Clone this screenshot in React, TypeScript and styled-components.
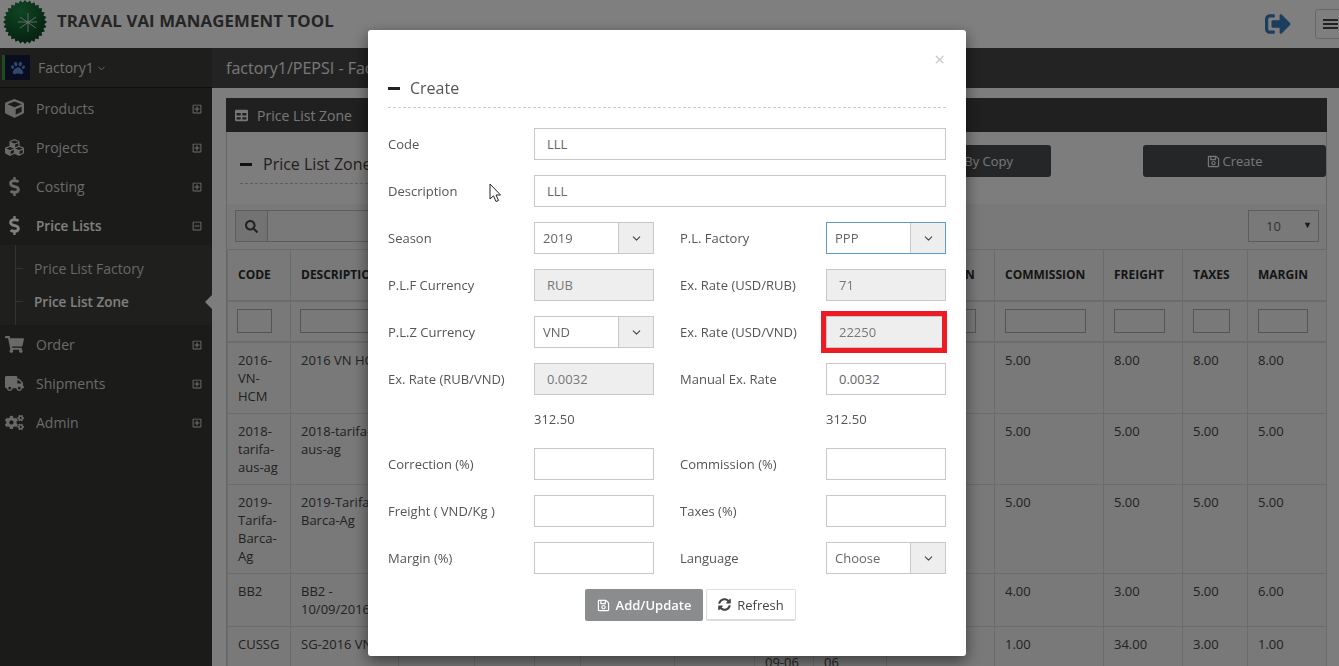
import {ReactNode} from 'react';
import {
  FaCogs,
  FaCube,
  FaCubes,
  FaDollarSign,
  FaPaw,
  FaRegMinusSquare,
  FaRegPlusSquare,
  FaRegSave,
  FaSearch,
  FaShoppingCart,
  FaSignOutAlt,
  FaSyncAlt,
  FaTable,
  FaTruck,
} from 'react-icons/fa';
import {LuChevronDown} from 'react-icons/lu';
import styled, {createGlobalStyle} from 'styled-components';

const GlobalStyle = createGlobalStyle`
  html, body {
    margin: 0;
    height: 100%;
    overflow: hidden;
    background: #fff;
    font-family: 'Open Sans', 'Liberation Sans', sans-serif;
    font-size: 13px;
    color: #333;
  }
  * {
    box-sizing: border-box;
  }
`;

const Page = styled.div`
  height: 100vh;
  display: flex;
  flex-direction: column;
  overflow: hidden;
`;

const Header = styled.header`
  height: 48px;
  flex: none;
  display: flex;
  align-items: center;
  padding-left: 3px;
  background: #fff;
`;

const LogoMark = styled.svg`
  flex: none;
  margin-bottom: 5px;
`;

const Brand = styled.div`
  flex: 1;
  margin-left: 10px;
  padding-bottom: 7px;
  font-size: 16.8px;
  font-weight: 700;
  color: #4a4a4a;
  letter-spacing: 0.1px;
`;

const LogoutIcon = styled(FaSignOutAlt)`
  width: 26px;
  height: 26px;
  margin-right: 24px;
  color: #3a7ab8;
`;

const MenuToggle = styled.div`
  width: 40px;
  height: 30px;
  flex: none;
  margin-right: -16px;
  padding: 9px 0 0 7px;
  border: 1px solid #ccc;
  border-radius: 3px;
`;

const MenuBar = styled.div`
  width: 15px;
  height: 2px;
  margin-bottom: 2px;
  background: #444;
`;

const Body = styled.div`
  flex: 1;
  display: flex;
  min-height: 0;
`;

const Sidebar = styled.aside`
  width: 212px;
  flex: none;
  background: #363634;
`;

const FactoryRow = styled.div`
  height: 40px;
  display: flex;
  align-items: center;
  padding-left: 2px;
  border-bottom: 1px solid #1c1c1c;
  background: #3c3c3a;
  color: #ddd;
  font-size: 14px;
`;

const FactoryBadge = styled.div`
  width: 28px;
  height: 25px;
  display: flex;
  align-items: center;
  justify-content: center;
  margin-right: 8px;
  border-left: 3px solid #3a9a3a;
  background: #151840;
  color: #5d92dd;
  font-size: 14px;
`;

const FactoryChevron = styled(LuChevronDown)`
  margin: 1px 0 0 2px;
  font-size: 11px;
`;

const NavItem = styled.div<{$active?: boolean}>`
  height: 39px;
  display: flex;
  align-items: center;
  padding: 0 10px 0 0;
  color: ${p => (p.$active ? '#fff' : '#d4d4d4')};
  font-size: ${p => (p.$active ? '13.5px' : '14px')};
  font-weight: ${p => (p.$active ? 600 : 400)};
`;

const NavIcon = styled.span`
  width: 36px;
  flex: none;
  display: flex;
  justify-content: center;
  padding-right: 7px;
  font-size: 19px;
`;

const NavLabel = styled.span`
  flex: 1;
`;

const NavToggle = styled.span`
  display: flex;
  font-size: 10px;
  color: #ddd;
`;

const NavList = styled.nav`
  padding-top: 1px;
`;

const SubMenu = styled.div`
  height: 80px;
  padding: 7px 0 0 34px;
  background: #3f3f3d;
  position: relative;
`;

const SubLine = styled.div`
  position: absolute;
  left: 15px;
  top: 0;
  bottom: 0;
  width: 1px;
  background: #666;
`;

const SubItem = styled.div<{$active?: boolean}>`
  height: 33px;
  display: flex;
  align-items: center;
  position: relative;
  color: ${p => (p.$active ? '#fff' : '#ccc')};
  font-size: ${p => (p.$active ? '13.5px' : '14px')};
  font-weight: ${p => (p.$active ? 600 : 400)};

  &::before {
    content: '';
    position: absolute;
    left: -19px;
    top: 16px;
    width: 8px;
    height: 1px;
    background: #666;
  }
`;

const ActiveArrow = styled.div`
  position: absolute;
  right: 0;
  top: 50px;
  border: 7px solid transparent;
  border-right-color: #fafafa;
  border-left-width: 0;
`;

const Main = styled.main`
  flex: 1;
  min-width: 0;
  background: #fafafa;
`;

const Breadcrumb = styled.div`
  height: 40px;
  display: flex;
  align-items: center;
  padding-left: 14px;
  background: #464646;
  color: #f0f0f0;
  font-size: 16px;
`;

const Panel = styled.section`
  width: 1101px;
  margin: 10px 0 0 14px;
  border-right: 1px solid #ccc;
  border-left: 1px solid #ccc;
`;

const PanelHeading = styled.div`
  height: 34px;
  display: flex;
  align-items: center;
  gap: 9px;
  margin: 0 -1px;
  padding-left: 9px;
  background: #404040;
  color: #eee;
  font-size: 14px;
`;

const HeadingIcon = styled(FaTable)`
  font-size: 13px;
`;

const TitleRow = styled.div`
  height: 72px;
  display: flex;
  align-items: flex-start;
  padding: 13px 0 0;
`;

const TitleBlock = styled.div`
  width: 627px;
  height: 39px;
  margin-left: 13px;
  display: flex;
  align-items: center;
  gap: 11px;
  border-bottom: 1px dashed #bbb;
  font-size: 16px;
  color: #4a3a3a;
`;

const Dash = styled.span`
  width: 12px;
  height: 3px;
  flex: none;
  background: #222;
`;

const DarkButton = styled.div<{$width: number; $gap?: number}>`
  width: ${p => p.$width}px;
  height: 32px;
  flex: none;
  display: flex;
  align-items: center;
  justify-content: center;
  gap: 3px;
  margin-left: ${p => p.$gap ?? 0}px;
  border-radius: 3px;
  background: #4b4c4f;
  color: #eee;
  font-size: 13px;
`;

const Toolbar = styled.div`
  height: 45px;
  display: flex;
  align-items: flex-start;
  padding: 6px 7px 0 8px;
  background: #f2f2f2;
`;

const SearchAddon = styled.div`
  width: 33px;
  height: 32px;
  display: flex;
  align-items: center;
  justify-content: center;
  background: #e6e6e6;
  border: 1px solid #bbb;
  color: #444;
  font-size: 13px;
`;

const SearchField = styled.div`
  width: 500px;
  height: 32px;
  margin-right: auto;
  border: 1px solid #bbb;
  border-left: 0;
`;

const PageSize = styled.div`
  width: 71px;
  height: 32px;
  display: flex;
  align-items: center;
  justify-content: space-between;
  padding: 0 6px 0 17px;
  border: 1px solid #bbb;
  color: #666;
`;

const Caret = styled.span`
  margin-bottom: 4px;
  font-size: 9px;
  color: #333;
`;

const Table = styled.table`
  width: 1099px;
  table-layout: fixed;
  border-collapse: collapse;
  background: #f2f2f2;
`;

const HeadCell = styled.th`
  height: 51px;
  padding: 0 0 0 10px;
  border: 1px solid #d8d8d8;
  border-bottom-width: 2px;
  text-align: left;
  font-size: 12px;
  font-weight: 700;
  white-space: nowrap;
  overflow: hidden;
  color: #2b2b2b;
`;

const FilterCell = styled.td<{$inset: number}>`
  height: 41px;
  padding: 0 0 0 ${p => p.$inset}px;
  border: 1px solid #d8d8d8;
  border-bottom-width: 2px;
`;

const FilterBox = styled.div<{$width: number}>`
  width: ${p => p.$width}px;
  height: 24px;
  border: 1px solid #aaa;
`;

const Cell = styled.td<{$tight?: boolean}>`
  padding: 8px ${p => (p.$tight ? 4 : 10)}px 8px 10px;
  border: 1px solid #d8d8d8;
  vertical-align: top;
  line-height: 18px;
  font-size: 13px;
  color: #444;
`;

const Backdrop = styled.div`
  position: fixed;
  inset: 0;
  background: rgba(0, 0, 0, 0.5);
`;

const Modal = styled.div`
  position: fixed;
  left: 368px;
  top: 30px;
  width: 598px;
  height: 626px;
  padding: 0 20px;
  border-radius: 3px;
  background: #fff;
  box-shadow: 0 5px 15px rgba(0, 0, 0, 0.5);
`;

const CloseMark = styled.div`
  position: absolute;
  right: 21px;
  top: 18px;
  font-size: 19px;
  line-height: 22px;
  color: #c8c8c8;
`;

const ModalTitle = styled.div`
  height: 78px;
  padding-bottom: 8px;
  display: flex;
  align-items: flex-end;
  gap: 10px;
  border-bottom: 1px dashed #ccc;
  font-size: 16px;
  color: #555;
`;

const ModalDash = styled(Dash)`
  margin-bottom: 9px;
`;

const Form = styled.div`
  display: flex;
  flex-direction: column;
  gap: 15px;
  padding-top: 20px;
`;

const FormRow = styled.div`
  display: flex;
  gap: 26px;
`;

const Field = styled.div<{$full?: boolean}>`
  width: ${p => (p.$full ? '558px' : '266px')};
  display: flex;
  align-items: center;
`;

const Label = styled.div`
  width: 146px;
  flex: none;
  font-size: 13px;
  color: #555;
`;

const InputBox = styled.div<{$disabled?: boolean}>`
  flex: 1;
  height: 32px;
  display: flex;
  align-items: center;
  padding-left: 12px;
  border: 1px solid #c8c8c8;
  background: ${p => (p.$disabled ? '#eee' : '#fff')};
  font-size: 13px;
  color: ${p => (p.$disabled ? '#777' : '#666')};
  position: relative;
`;

const Highlight = styled.div`
  position: absolute;
  left: -6px;
  top: -6px;
  right: -2px;
  bottom: -6px;
  border: 5px solid #ed1c24;
`;

const SelectBox = styled.div<{$focused?: boolean}>`
  flex: 1;
  height: 32px;
  display: flex;
  align-items: center;
  justify-content: space-between;
  padding-left: 8px;
  border: 1px solid ${p => (p.$focused ? '#5b9bd1' : '#c8c8c8')};
  font-size: 13px;
  color: #666;
`;

const SelectAddon = styled.div`
  width: 35px;
  height: 100%;
  display: flex;
  align-items: center;
  justify-content: center;
  border-left: 1px solid #c8c8c8;
  background: #eee;
  font-size: 13px;
  color: #444;
`;

const ValueRow = styled.div`
  height: 23px;
  display: flex;
  line-height: 18px;
  font-size: 13px;
  color: #555;
`;

const ValueText = styled.div`
  width: 292px;
  flex: none;
  padding-left: 146px;
`;

const Actions = styled.div`
  display: flex;
  gap: 3px;
  padding-left: 197px;
`;

const PrimaryButton = styled.div`
  width: 118px;
  height: 32px;
  display: flex;
  align-items: center;
  justify-content: center;
  gap: 6px;
  border-radius: 2px;
  background: #8b8c8d;
  color: #fff;
  font-size: 13px;
  font-weight: 600;
`;

const RefreshButton = styled.div`
  width: 90px;
  height: 32px;
  display: flex;
  align-items: center;
  justify-content: center;
  gap: 6px;
  border: 1px solid #ddd;
  border-bottom-width: 2px;
  border-radius: 2px;
  background: #fff;
  color: #444;
  font-size: 13px;
`;

const Pointer = styled.svg`
  position: fixed;
  left: 489px;
  top: 183px;
`;

const columns = [63, 108, 76, 60, 46, 94, 80, 59, 73, 108, 109, 79, 65, 79];

const filterWidths = [35, 100, 56, 40, 30, 74, 60, 40, 53, 79, 81, 51, 37, 50];

const headings: Record<number, string> = {
  0: 'CODE',
  1: 'DESCRIPTION',
  9: 'CORRECTION',
  10: 'COMMISSION',
  11: 'FREIGHT',
  12: 'TAXES',
  13: 'MARGIN',
};

type PriceRow = {
  code: string;
  description: string;
  commission: string;
  freight: string;
  taxes: string;
  margin: string;
  from?: string;
  to?: string;
};

const rows: PriceRow[] = [
  {code: '2016-VN-HCM', description: '2016 VN HCM', commission: '5.00', freight: '8.00', taxes: '8.00', margin: '8.00'},
  {code: '2018-tarifa-aus-ag', description: '2018-tarifa-aus-ag', commission: '5.00', freight: '5.00', taxes: '5.00', margin: '5.00'},
  {code: '2019-Tarifa-Barca-Ag', description: '2019-Tarifa-Barca-Ag', commission: '5.00', freight: '5.00', taxes: '5.00', margin: '5.00'},
  {code: 'BB2', description: 'BB2 - 10/09/2016', commission: '4.00', freight: '3.00', taxes: '5.00', margin: '6.00'},
  {code: 'CUSSG', description: 'SG-2016 VN', commission: '1.00', freight: '34.00', taxes: '3.00', margin: '1.00', from: '2016-09-06', to: '2017-09-06'},
];

const navTop: [string, ReactNode][] = [
  ['Products', <FaCube key="cube" />],
  ['Projects', <FaCubes key="cubes" />],
  ['Costing', <FaDollarSign key="costing" />],
];

const navBottom: [string, ReactNode][] = [
  ['Order', <FaShoppingCart key="cart" />],
  ['Shipments', <FaTruck key="truck" />],
  ['Admin', <FaCogs key="cogs" />],
];

const sealPoints = Array.from({length: 56}, (_, i) => {
  const radius = i % 2 === 0 ? 22 : 19.5;
  const angle = (i / 56) * Math.PI * 2;
  return `${22 + radius * Math.cos(angle)},${22 + radius * Math.sin(angle)}`;
}).join(' ');

const Logo = () => (
  <LogoMark width="44" height="44" viewBox="0 0 44 44">
    <defs>
      <radialGradient id="seal" cx="0.4" cy="0.25" r="0.9">
        <stop offset="0" stopColor="#1f8a45" />
        <stop offset="1" stopColor="#06351a" />
      </radialGradient>
    </defs>
    <polygon points={sealPoints} fill="url(#seal)" />
    <g stroke="#e8efe6" strokeWidth="0.8">
      <line x1="25" y1="13" x2="25" y2="32" />
      <line x1="17" y1="17" x2="33" y2="28" />
      <line x1="17" y1="28" x2="33" y2="17" />
      <line x1="15" y1="22" x2="34" y2="22" />
    </g>
  </LogoMark>
);

const FieldSelect = ({value, focused}: {value: string; focused?: boolean}) => (
  <SelectBox $focused={focused}>
    {value}
    <SelectAddon>
      <LuChevronDown />
    </SelectAddon>
  </SelectBox>
);

const NavRow = ({label, icon}: {label: string; icon: ReactNode}) => (
  <NavItem>
    <NavIcon>{icon}</NavIcon>
    <NavLabel>{label}</NavLabel>
    <NavToggle>
      <FaRegPlusSquare />
    </NavToggle>
  </NavItem>
);

export default function App() {
  return (
    <Page>
      <GlobalStyle />
      <Header>
        <Logo />
        <Brand>TRAVAL VAI MANAGEMENT TOOL</Brand>
        <LogoutIcon />
        <MenuToggle>
          <MenuBar />
          <MenuBar />
          <MenuBar />
        </MenuToggle>
      </Header>
      <Body>
        <Sidebar>
          <FactoryRow>
            <FactoryBadge>
              <FaPaw />
            </FactoryBadge>
            Factory1
            <FactoryChevron />
          </FactoryRow>
          <NavList>
            {navTop.map(([label, icon]) => (
              <NavRow key={label} label={label} icon={icon} />
            ))}
            <NavItem $active>
              <NavIcon>
                <FaDollarSign />
              </NavIcon>
              <NavLabel>Price Lists</NavLabel>
              <NavToggle>
                <FaRegMinusSquare />
              </NavToggle>
            </NavItem>
            <SubMenu>
              <SubLine />
              <SubItem>Price List Factory</SubItem>
              <SubItem $active>Price List Zone</SubItem>
              <ActiveArrow />
            </SubMenu>
            {navBottom.map(([label, icon]) => (
              <NavRow key={label} label={label} icon={icon} />
            ))}
          </NavList>
        </Sidebar>
        <Main>
          <Breadcrumb>factory1/PEPSI - Factory</Breadcrumb>
          <Panel>
            <PanelHeading>
              <HeadingIcon />
              Price List Zone
            </PanelHeading>
            <TitleRow>
              <TitleBlock>
                <Dash />
                Price List Zone
              </TitleBlock>
              <DarkButton $width={184}>
                <FaRegSave />
                Create By Copy
              </DarkButton>
              <DarkButton $width={183} $gap={92}>
                <FaRegSave />
                Create
              </DarkButton>
            </TitleRow>
            <Toolbar>
              <SearchAddon>
                <FaSearch />
              </SearchAddon>
              <SearchField />
              <PageSize>
                10
                <Caret>▼</Caret>
              </PageSize>
            </Toolbar>
            <Table>
              <colgroup>
                {columns.map((width, i) => (
                  <col key={i} width={width} />
                ))}
              </colgroup>
              <thead>
                <tr>
                  {columns.map((_, i) => (
                    <HeadCell key={i}>{headings[i]}</HeadCell>
                  ))}
                </tr>
                <tr>
                  {filterWidths.map((width, i) => (
                    <FilterCell key={i} $inset={i < 9 ? 9 : 10}>
                      <FilterBox $width={width} />
                    </FilterCell>
                  ))}
                </tr>
              </thead>
              <tbody>
                {rows.map(row => (
                  <tr key={row.code}>
                    <Cell>{row.code}</Cell>
                    <Cell>{row.description}</Cell>
                    <Cell />
                    <Cell />
                    <Cell />
                    <Cell />
                    <Cell />
                    <Cell>{row.from}</Cell>
                    <Cell $tight>{row.to}</Cell>
                    <Cell />
                    <Cell>{row.commission}</Cell>
                    <Cell>{row.freight}</Cell>
                    <Cell>{row.taxes}</Cell>
                    <Cell>{row.margin}</Cell>
                  </tr>
                ))}
              </tbody>
            </Table>
          </Panel>
        </Main>
      </Body>
      <Backdrop />
      <Modal>
        <CloseMark>×</CloseMark>
        <ModalTitle>
          <ModalDash />
          Create
        </ModalTitle>
        <Form>
          <FormRow>
            <Field $full>
              <Label>Code</Label>
              <InputBox>LLL</InputBox>
            </Field>
          </FormRow>
          <FormRow>
            <Field $full>
              <Label>Description</Label>
              <InputBox>LLL</InputBox>
            </Field>
          </FormRow>
          <FormRow>
            <Field>
              <Label>Season</Label>
              <FieldSelect value="2019" />
            </Field>
            <Field>
              <Label>P.L. Factory</Label>
              <FieldSelect value="PPP" focused />
            </Field>
          </FormRow>
          <FormRow>
            <Field>
              <Label>P.L.F Currency</Label>
              <InputBox $disabled>RUB</InputBox>
            </Field>
            <Field>
              <Label>Ex. Rate (USD/RUB)</Label>
              <InputBox $disabled>71</InputBox>
            </Field>
          </FormRow>
          <FormRow>
            <Field>
              <Label>P.L.Z Currency</Label>
              <FieldSelect value="VND" />
            </Field>
            <Field>
              <Label>Ex. Rate (USD/VND)</Label>
              <InputBox $disabled>
                22250
                <Highlight />
              </InputBox>
            </Field>
          </FormRow>
          <FormRow>
            <Field>
              <Label>Ex. Rate (RUB/VND)</Label>
              <InputBox $disabled>0.0032</InputBox>
            </Field>
            <Field>
              <Label>Manual Ex. Rate</Label>
              <InputBox>0.0032</InputBox>
            </Field>
          </FormRow>
          <ValueRow>
            <ValueText>312.50</ValueText>
            <ValueText>312.50</ValueText>
          </ValueRow>
          <FormRow>
            <Field>
              <Label>Correction (%)</Label>
              <InputBox />
            </Field>
            <Field>
              <Label>Commission (%)</Label>
              <InputBox />
            </Field>
          </FormRow>
          <FormRow>
            <Field>
              <Label>Freight ( VND/Kg )</Label>
              <InputBox />
            </Field>
            <Field>
              <Label>Taxes (%)</Label>
              <InputBox />
            </Field>
          </FormRow>
          <FormRow>
            <Field>
              <Label>Margin (%)</Label>
              <InputBox />
            </Field>
            <Field>
              <Label>Language</Label>
              <FieldSelect value="Choose" />
            </Field>
          </FormRow>
          <Actions>
            <PrimaryButton>
              <FaRegSave />
              Add/Update
            </PrimaryButton>
            <RefreshButton>
              <FaSyncAlt />
              Refresh
            </RefreshButton>
          </Actions>
        </Form>
      </Modal>
      <Pointer width="13" height="21" viewBox="0 0 13 21">
        <path d="M1 1 L1 16 L4.5 12.8 L7 18.5 L9.5 17.4 L7 12 L11.5 12 Z" fill="#fff" stroke="#222" strokeWidth="1" />
      </Pointer>
    </Page>
  );
}
